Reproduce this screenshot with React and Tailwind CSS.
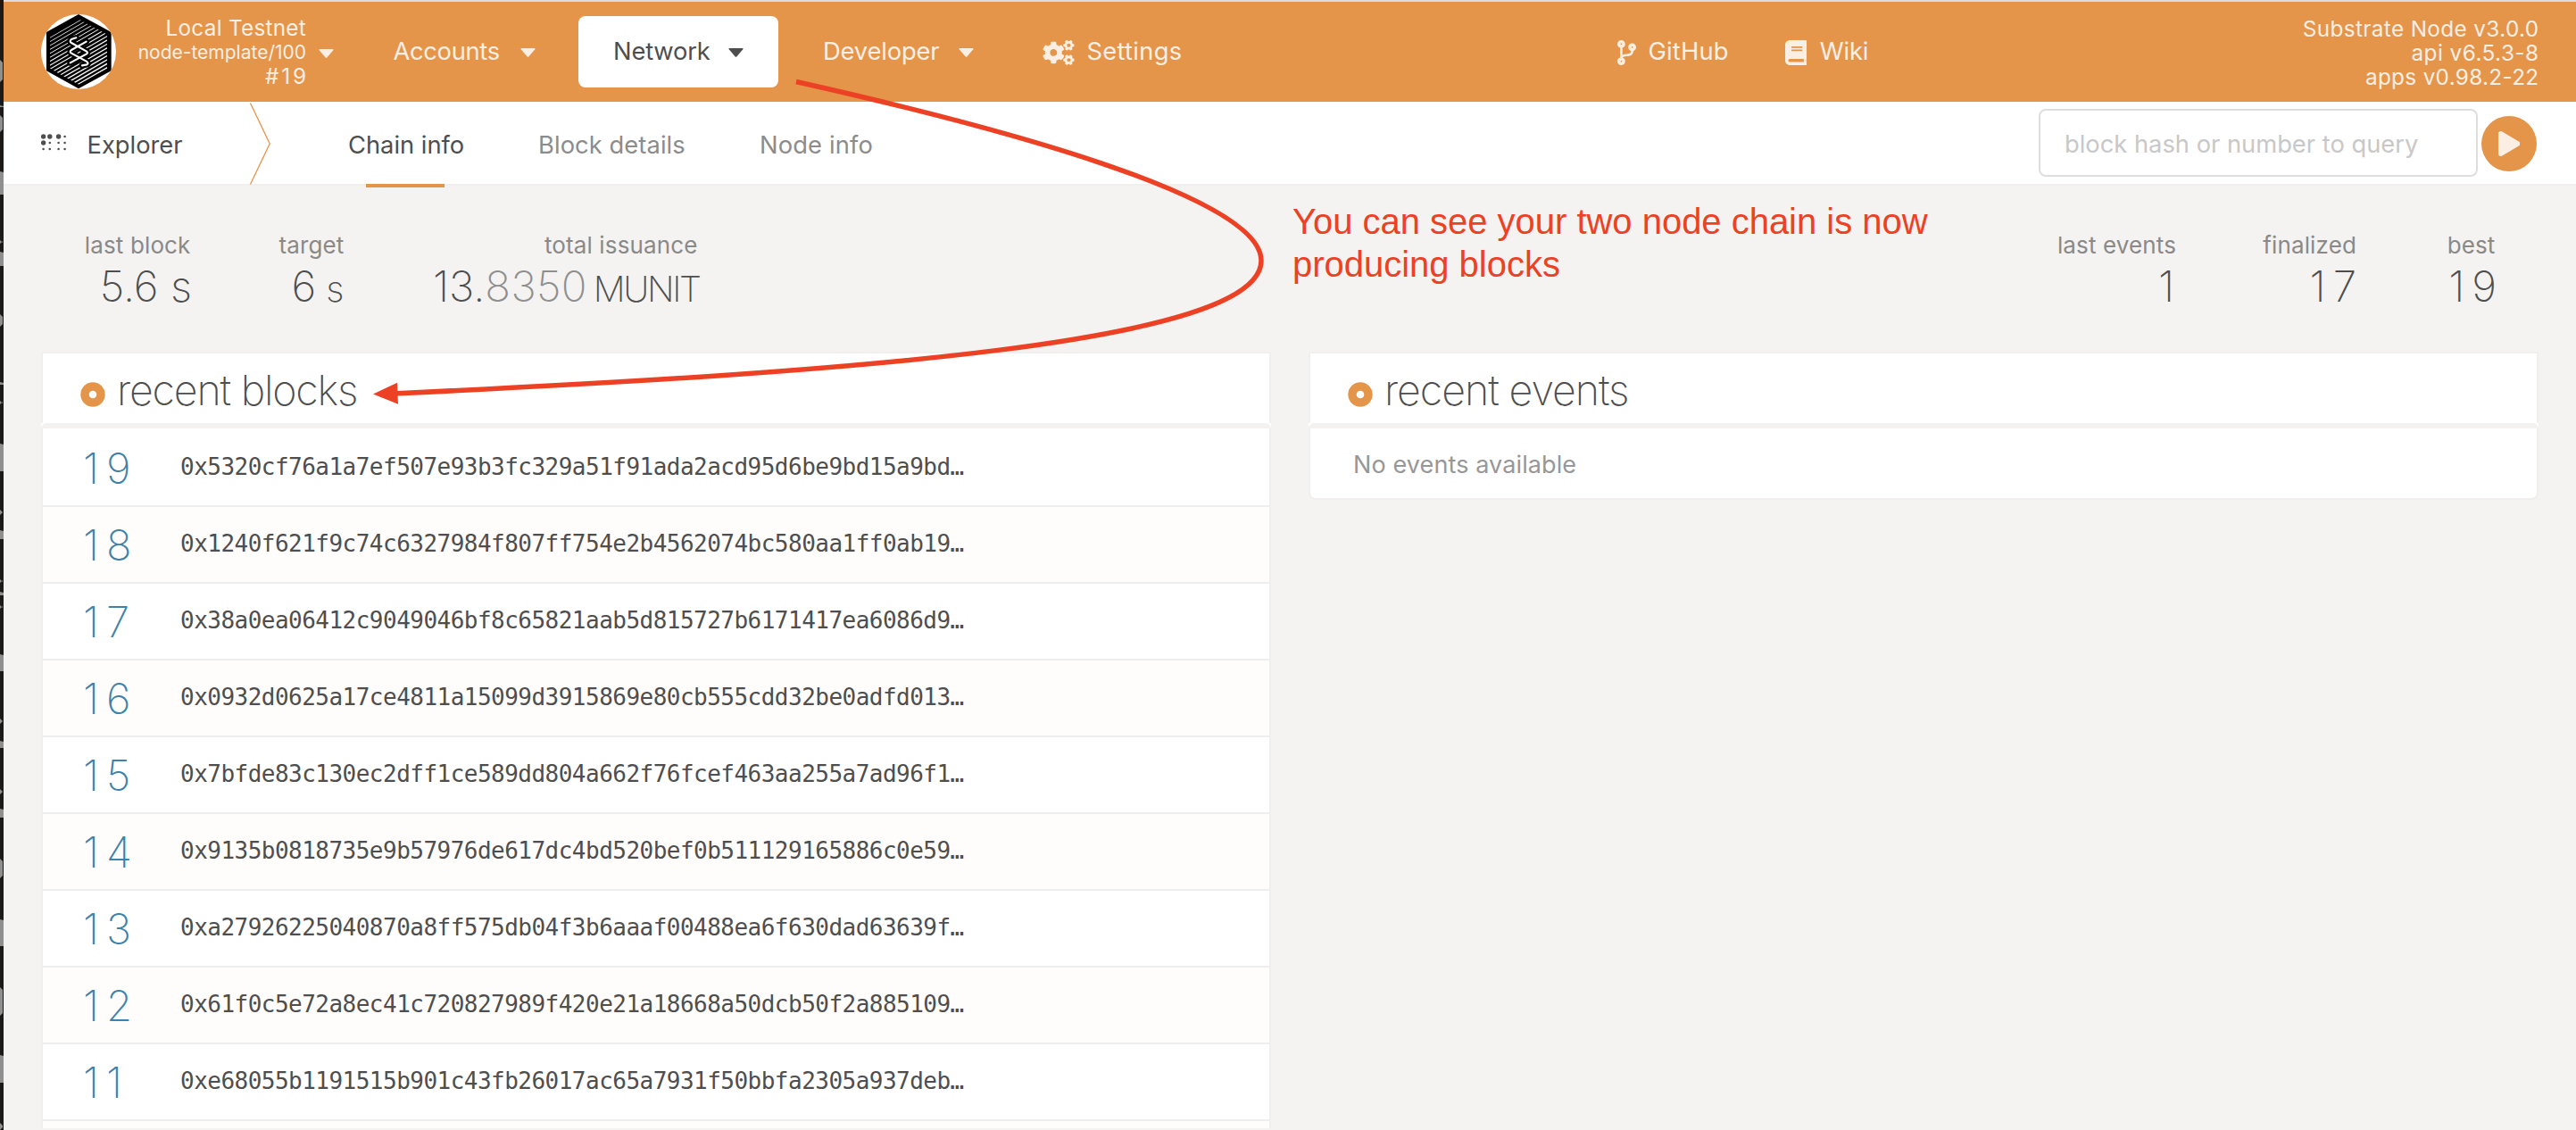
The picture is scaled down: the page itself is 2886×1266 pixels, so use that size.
import React from "react";
import { FaCogs, FaCodeBranch, FaBook, FaPlay } from "react-icons/fa";

const BLOCKS = [
  ["19", "0x5320cf76a1a7ef507e93b3fc329a51f91ada2acd95d6be9bd15a9bd…"],
  ["18", "0x1240f621f9c74c6327984f807ff754e2b4562074bc580aa1ff0ab19…"],
  ["17", "0x38a0ea06412c9049046bf8c65821aab5d815727b6171417ea6086d9…"],
  ["16", "0x0932d0625a17ce4811a15099d3915869e80cb555cdd32be0adfd013…"],
  ["15", "0x7bfde83c130ec2dff1ce589dd804a662f76fcef463aa255a7ad96f1…"],
  ["14", "0x9135b0818735e9b57976de617dc4bd520bef0b511129165886c0e59…"],
  ["13", "0xa27926225040870a8ff575db04f3b6aaaf00488ea6f630dad63639f…"],
  ["12", "0x61f0c5e72a8ec41c720827989f420e21a18668a50dcb50f2a885109…"],
  ["11", "0xe68055b1191515b901c43fb26017ac65a7931f50bbfa2305a937deb…"],
];

// Sliver of the terminal window behind the browser: [top, bottom] of each glyph edge.
const SLIVERS = [
  [67, 92], [118, 120], [129, 148], [192, 218], [269, 273], [282, 298], [352, 366],
  [428, 431], [449, 453], [497, 528], [571, 577], [594, 604], [649, 653], [663, 667],
  [678, 682], [733, 752], [805, 811], [830, 838], [884, 890], [906, 916], [962, 984],
  [1030, 1060], [1106, 1138], [1182, 1213], [1258, 1266],
];

function Caret() {
  return (
    <svg className="h-[10px] w-[17px] fill-current" viewBox="0 0 17 10">
      <path d="M1.2 0H15.8Q17 .2 16.3 1.3L9.5 9.2Q8.5 10.2 7.5 9.2L.7 1.3Q0 .2 1.2 0Z" />
    </svg>
  );
}

function Logo() {
  const lines = [];
  for (let i = 0; i < 22; i++) lines.push(48 + i * 13.2);
  return (
    <svg className="h-[84px] w-[84px] shrink-0" viewBox="0 0 252 252">
      <defs>
        <clipPath id="disc">
          <circle cx="126" cy="126" r="126" />
        </clipPath>
        <clipPath id="hex">
          <path d="M126 16L222 68V182L126 236L30 182V68Z" />
        </clipPath>
      </defs>
      <circle cx="126" cy="126" r="126" fill="#fff" />
      <g clipPath="url(#disc)">
        <path d="M126 0L236 60V190L126 250L18 190V60Z" fill="#000" />
        <g clipPath="url(#hex)" stroke="#fff">
          {lines.map((y, i) => (
            <path key={y} d={`M20 ${y + 10}L232 ${y - 112}`} strokeWidth={2 + i * 0.14} />
          ))}
        </g>
        <g fill="none" strokeLinecap="round" strokeLinejoin="round">
          <g stroke="#000" strokeWidth="20">
            <path d="M118 79L102 84Q94 91 102 96L152 124Q160 129 152 134L98 163" />
            <path d="M152 92L102 120Q94 126 102 131L152 158Q162 165 154 169L138 172" />
          </g>
          <g stroke="#fff" strokeWidth="6.5">
            <path d="M118 79L102 84Q94 91 102 96L152 124Q160 129 152 134L98 163" />
            <path d="M152 92L102 120Q94 126 102 131L152 158Q162 165 154 169L138 172" />
          </g>
        </g>
      </g>
    </svg>
  );
}

function Ring() {
  return (
    <svg className="mt-[10px] h-[28px] w-[28px] shrink-0" viewBox="0 0 28 28">
      <circle cx="14" cy="14" r="9" fill="none" stroke="#e4954a" strokeWidth="9.4" />
    </svg>
  );
}

function Stat({ label, className, children }) {
  return (
    <div className={`flex flex-col items-end ${className}`}>
      <div className="h-[40px] text-[26px] leading-[40px] tracking-[0.13px] whitespace-nowrap text-[#8a8988]">{label}</div>
      <div className="flex h-[52px] items-baseline text-[47.6px] leading-[52px] font-extralight whitespace-nowrap text-[#4e4e4e]">
        {children}
      </div>
    </div>
  );
}

function PanelHeader({ title, titleClass }) {
  return (
    <>
      <div className="flex h-[80px] items-center border-x-2 border-t-2 border-[#f0efed] bg-white pt-[4px] pl-[42px]">
        <Ring />
        <h1 className={`ml-[13px] text-[46.5px] leading-[60px] font-extralight whitespace-nowrap text-[#4e4e4e] ${titleClass}`}>
          {title}
        </h1>
      </div>
      <div className="bg-white">
        <div className="h-[6px] rounded-t-[6px] bg-[#f3f2f0]" />
      </div>
    </>
  );
}

export default function App() {
  return (
    <div className="relative flex h-[1266px] w-[2886px] overflow-hidden bg-[#f4f3f1] font-['Inter',sans-serif] text-[#4e4e4e]">
      <svg className="h-[1266px] w-[4px] shrink-0 bg-[#1c1a18]" viewBox="0 0 4 1266">
        {SLIVERS.map(([a, b], i) => (
          <path key={a} d={i % 2 ? `M0 ${a}L4 ${a + 1}V${b}H0Z` : `M0 ${a}L3 ${a + 3}V${b - 3}L0 ${b}Z`} fill="#8f8f8f" />
        ))}
      </svg>

      <div className="flex w-[2882px] flex-col">
        <div className="h-[2px] shrink-0 bg-[#dcdbdf]" />

        <header className="flex h-[112px] shrink-0 items-center bg-[#e4954a] pl-[42px] text-[27.3px] text-[#fbefe4]">
          <Logo />
          <div className="w-[213px] pt-px text-right text-[24.3px] leading-[27px] whitespace-nowrap">
            <div className="tracking-[0.27px]">Local Testnet</div>
            <div className="text-[21px] leading-[27px]">node-template/100</div>
            <div className="mr-[-2.8px] tracking-[2.8px]">#19</div>
          </div>
          <div className="mt-[3px] ml-[14px] flex">
            <Caret />
          </div>

          <nav className="ml-[27px] flex h-[80px] items-center pt-px whitespace-nowrap">
            <div className="flex h-[80px] w-[238px] items-center justify-between pr-[39px] pl-[39.5px]">
              <span className="tracking-[-0.3px]">Accounts</span>
              <Caret />
            </div>
            <div className="mt-[-1px] ml-[9px] flex h-[80px] w-[224px] items-center justify-between rounded-[8px] bg-white pt-px pr-[39px] pl-[39px] text-[#4e4e4e]">
              <span className="tracking-[-0.17px]">Network</span>
              <Caret />
            </div>
            <div className="ml-[11px] flex h-[80px] w-[247px] items-center justify-between pr-[39px] pl-[39px]">
              <span className="tracking-[-0.14px]">Developer</span>
              <Caret />
            </div>
            <div className="ml-[38px] flex items-center">
              <FaCogs className="h-[28px] w-[36px]" />
              <span className="ml-[13.5px] tracking-[0.31px]">Settings</span>
            </div>
          </nav>

          <nav className="ml-[487px] flex items-center pt-px whitespace-nowrap">
            <FaCodeBranch className="h-[28px] w-[21px]" />
            <span className="ml-[14px] tracking-[0.19px]">GitHub</span>
            <FaBook className="ml-[63px] h-[28px] w-[24.5px]" />
            <span className="ml-[14.5px] tracking-[-0.16px]">Wiki</span>
          </nav>

          <div className="mr-[41.5px] ml-auto pt-[3px] text-right text-[24.3px] leading-[27px] whitespace-nowrap">
            <div className="tracking-[0.38px]">Substrate Node v3.0.0</div>
            <div className="tracking-[0.46px]">api v6.5.3-8</div>
            <div className="tracking-[0.33px]">apps v0.98.2-22</div>
          </div>
        </header>

        <div className="flex h-[94px] shrink-0 border-b-2 border-[#f0efee] bg-white text-[27.3px] leading-[97px] whitespace-nowrap">
          <svg className="mt-[36px] ml-[42px] h-[22px] w-[30px] shrink-0" viewBox="0 0 30 22" fill="#4e4e4e">
            {[2.6, 9.8, 19.6, 26.6].map((x, c) =>
              [3, 10, 17].map((y, r) => (
                <circle key={`${x}-${y}`} cx={x} cy={y} r={(r === 0 && c < 3) || (r === 1 && c === 0) ? 2.7 : 1.3} />
              ))
            )}
          </svg>
          <span className="ml-[21.5px] w-[182.5px]">Explorer</span>
          <svg className="h-[94px] w-[24px] shrink-0" viewBox="0 0 24 94" fill="none">
            <path d="M.5 1.5L22.2 47L.5 92.5" stroke="#e4954a" strokeWidth="1.3" />
          </svg>
          <div className="relative ml-[86px] h-[92px] w-[131px]">
            Chain info
            <div className="absolute top-[92px] left-[20px] h-[4px] w-[88px] bg-[#e4954a]" />
          </div>
          <span className="ml-[82px] w-[166px] tracking-[0.08px] text-[#8c8c8c]">Block details</span>
          <span className="ml-[82px] tracking-[0.14px] text-[#8c8c8c]">Node info</span>
          <div className="mt-[8px] ml-auto flex h-[76px] w-[492px] items-center rounded-[8px] border-2 border-[#dedede] bg-white pt-[3px] pl-[27px] text-[#c8c8c8]">
            block hash or number to query
          </div>
          <div className="mt-[16px] mr-[44px] ml-[4px] flex h-[62px] w-[62px] items-center justify-center rounded-full bg-[#e4954a] text-[#fbefe4]">
            <FaPlay className="h-[28px] w-[24.5px]" />
          </div>
        </div>

        <section className="flex h-[186px] shrink-0 pt-[47px]">
          <Stat label="last block" className="w-[209.5px]">
            <span className="mr-[-1.5px]">5.6 s</span>
          </Stat>
          <Stat label="target" className="w-[172px]">
            6<span className="ml-[11px] text-[40px]">s</span>
          </Stat>
          <Stat label="total issuance" className="w-[396px]">
            13.<span className="tracking-[0.3px] text-[#8f8f8f]">8350</span>
            <span className="mr-[-2.2px] ml-[7px] text-[40px] tracking-[-2.4px]">MUNIT</span>
          </Stat>
          <Stat label="last events" className="ml-auto w-[140px]">
            <span className="mr-[2px]">1</span>
          </Stat>
          <Stat label="finalized" className="w-[202px]">
            <span className="mr-[-8px] tracking-[8px]">17</span>
          </Stat>
          <Stat label="best" className="mr-[90.5px] w-[155.5px]">
            <span className="mr-[-9.5px] tracking-[8px]">19</span>
          </Stat>
        </section>

        <main className="flex gap-[42px] px-[42px]">
          <section className="w-[1378px]">
            <PanelHeader title="recent blocks" titleClass="tracking-[-1.18px]" />
            <div className="border-x-2 border-[#f0efed]">
              {BLOCKS.map(([n, hash], i) => (
                <div
                  key={n}
                  className={`flex items-center border-b-2 border-[#efeeee] pl-[45px] ${
                    i === 0 ? "h-[88px] pt-[2px]" : "h-[86px]"
                  } ${i % 2 ? "bg-[#fffdfb]" : "bg-white"}`}
                >
                  <span className="mt-[2px] w-[109px] text-[47.2px] leading-[56px] font-extralight tracking-[8px] text-[#3f82a9]">{n}</span>
                  <span className="mb-px font-['DejaVu_Sans_Mono',monospace] text-[26px] tracking-[-0.52px] whitespace-nowrap">{hash}</span>
                </div>
              ))}
              <div className="h-[8px] bg-[#fffdfb]" />
            </div>
          </section>

          <section className="w-[1378px]">
            <PanelHeader title="recent events" titleClass="tracking-[-1.05px]" />
            <div className="h-[80px] rounded-b-[8px] border-x-2 border-b-2 border-[#f0efed] bg-white pl-[48px] text-[27px] leading-[81px] tracking-[0.11px] text-[#979797]">
              No events available
            </div>
          </section>
        </main>
      </div>

      <svg className="absolute top-0 left-0 h-[500px] w-[1450px]" viewBox="0 0 1450 500" fill="none">
        <path d="M892 91.5C1130 145 1413 222 1413 292C1413 385 950 417 440 441" stroke="#ec4124" strokeWidth="5.5" />
        <path d="M418 441.5L445 428.7L446 452.7Z" fill="#ec4124" />
      </svg>
      <p className="absolute top-[224px] left-[1448px] w-[760px] font-['Liberation_Sans',sans-serif] text-[40px] leading-[48px] tracking-[-0.02px] text-[#ec4124]">
        You can see your two node chain is now
        <br />
        producing blocks
      </p>
    </div>
  );
}
